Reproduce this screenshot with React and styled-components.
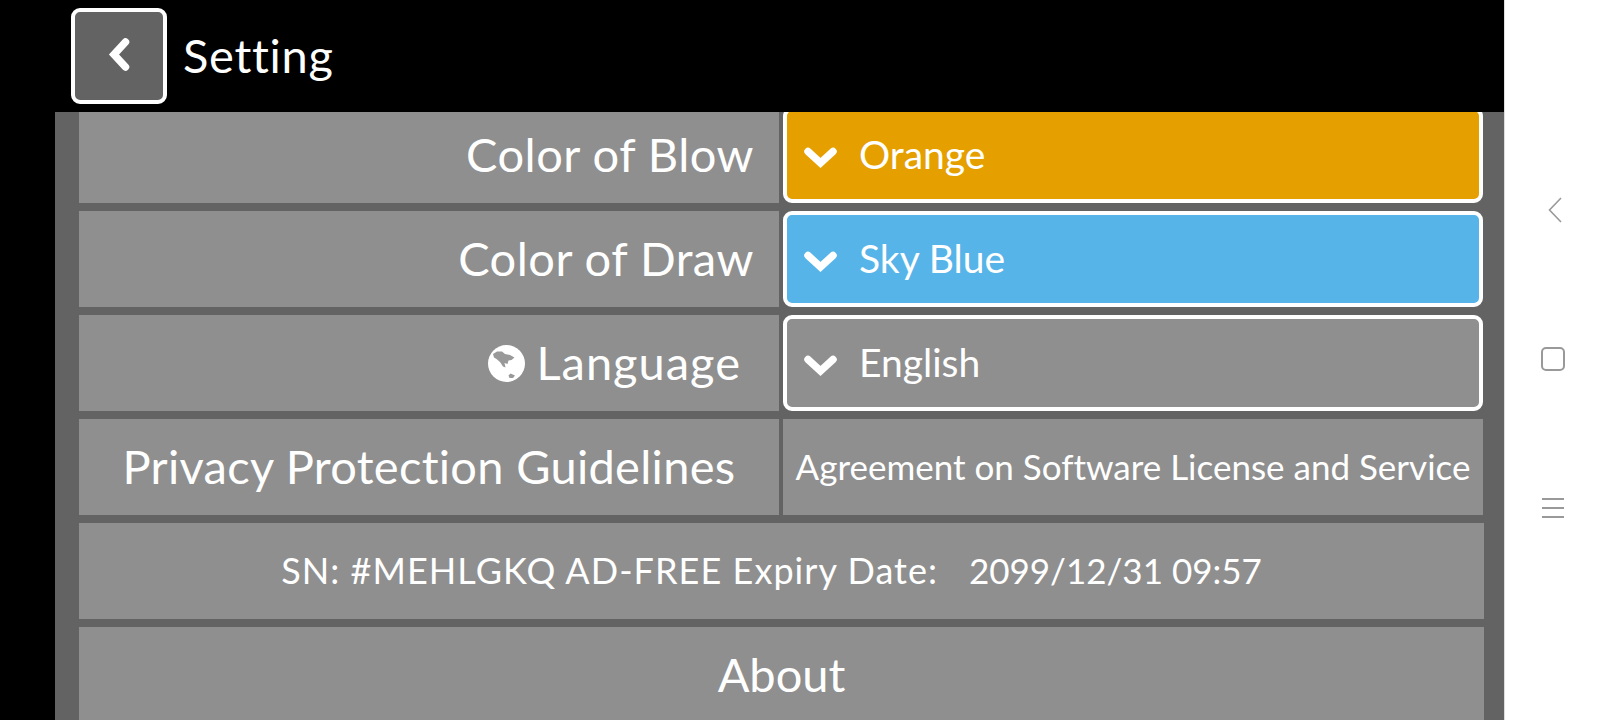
import React from "react";
import styled, { createGlobalStyle } from "styled-components";

const GlobalStyle = createGlobalStyle`
  html, body {
    margin: 0;
    padding: 0;
    background: #000;
    overflow: hidden;
  }
`;

const options = [
  { label: "Color of Blow", value: "Orange", color: "#e5a000" },
  { label: "Color of Draw", value: "Sky Blue", color: "#56b4e9" },
];

function Chevron() {
  return (
    <ChevronSvg viewBox="0 0 33 22">
      <path
        d="M4 4.5 L16.5 16 L29 4.5"
        fill="none"
        stroke="#fff"
        strokeWidth="7.5"
        strokeLinecap="round"
      />
    </ChevronSvg>
  );
}

function Globe() {
  return (
    <GlobeSvg viewBox="0 0 37 37">
      <circle cx="18.5" cy="18.5" r="18.5" fill="#fff" />
      <path
        d="M5 9 L9 6.5 L14 6.5 L17 9 L22 10 L26.5 12.5 L23.5 15 L20.5 15.5 L19.5 19 L16.5 18 L17.5 22.5 L15 21.5 L12 17 L8.5 14 L6 12.5 Z"
        fill="#999"
      />
      <path d="M20.5 30.5 L22.5 28.5 L27 30.5 L25 33 L21.5 33 Z" fill="#999" />
    </GlobeSvg>
  );
}

function SelectBox({ value, color }) {
  return (
    <Select $color={color}>
      <Chevron />
      <SelectText>{value}</SelectText>
    </Select>
  );
}

export default function App() {
  return (
    <Screen>
      <GlobalStyle />
      <Main>
        <Header>
          <BackButton>
            <svg width="22" height="33" viewBox="0 0 22 33">
              <path
                d="M17.5 4 L6 16.5 L17.5 29"
                fill="none"
                stroke="#fff"
                strokeWidth="7.5"
                strokeLinecap="round"
              />
            </svg>
          </BackButton>
          <Title>Setting</Title>
        </Header>
        <Panel>
          <Rows>
            {options.map((o) => (
              <Row key={o.label}>
                <Label>{o.label}</Label>
                <SelectBox value={o.value} color={o.color} />
              </Row>
            ))}
            <Row>
              <LanguageLabel>
                <Globe />
                Language
              </LanguageLabel>
              <SelectBox value="English" color="#8f8f8f" />
            </Row>
            <Row>
              <Cell>Privacy Protection Guidelines</Cell>
              <SmallCell>Agreement on Software License and Service</SmallCell>
            </Row>
            <WideCell>
              <SerialLabel>SN: #MEHLGKQ AD-FREE Expiry Date:&nbsp;&nbsp; </SerialLabel>
              <SerialDate>2099/12/31 09:57</SerialDate>
            </WideCell>
            <AboutCell>About</AboutCell>
          </Rows>
        </Panel>
      </Main>
      <NavBar>
        <NavBack viewBox="0 0 14 26">
          <path d="M13 1 L1.5 13 L13 25" fill="none" stroke="#999" strokeWidth="1.6" />
        </NavBack>
        <NavHome />
        <NavMenu>
          <NavLine />
          <NavLine />
          <NavLine />
        </NavMenu>
      </NavBar>
    </Screen>
  );
}

const Screen = styled.div`
  display: flex;
  width: 1600px;
  height: 720px;
  overflow: hidden;
  font-family: Lato, "Open Sans", sans-serif;
  font-variant-ligatures: none;
  color: #fff;
`;

const Main = styled.div`
  width: 1504px;
  height: 720px;
  display: flex;
  flex-direction: column;
  background: #000;
`;

const Header = styled.div`
  height: 112px;
  flex: none;
  display: flex;
  align-items: center;
  padding-left: 71px;
  gap: 16px;
`;

const BackButton = styled.div`
  width: 96px;
  height: 96px;
  box-sizing: border-box;
  border: 4px solid #fff;
  border-radius: 9px;
  background: #636363;
  display: flex;
  align-items: center;
  justify-content: center;
  padding-bottom: 4px;
`;

const Title = styled.div`
  font-size: 47px;
  letter-spacing: 0.7px;
  line-height: 1;
  padding-bottom: 1px;
`;

const Panel = styled.div`
  flex: 1;
  margin-left: 55px;
  overflow: hidden;
  background: #636363;
  padding: 0 20px 0 24px;
`;

const Rows = styled.div`
  display: flex;
  flex-direction: column;
  gap: 8px;
  margin-top: -5px;
`;

const Row = styled.div`
  display: grid;
  grid-template-columns: 700px 700px;
  gap: 4px;
  height: 96px;
`;

const Label = styled.div`
  box-sizing: border-box;
  background: #8f8f8f;
  display: flex;
  align-items: center;
  justify-content: flex-end;
  padding: 0 25px 3px 0;
  font-size: 47px;
  letter-spacing: 0.5px;
`;

const LanguageLabel = styled(Label)`
  padding-right: 38px;
  gap: 11px;
  letter-spacing: 1px;
`;

const GlobeSvg = styled.svg`
  width: 37px;
  height: 37px;
  flex: none;
  margin-top: 3px;
`;

const Select = styled.div`
  box-sizing: border-box;
  background: ${(p) => p.$color};
  border: 4px solid #fff;
  border-radius: 9px;
  display: flex;
  align-items: center;
  padding-left: 17px;
`;

const ChevronSvg = styled.svg`
  width: 33px;
  height: 22px;
  flex: none;
  margin-top: 6px;
`;

const SelectText = styled.span`
  margin-left: 22px;
  font-size: 39px;
  padding-bottom: 3px;
`;

const Cell = styled.div`
  box-sizing: border-box;
  background: #8f8f8f;
  display: flex;
  align-items: center;
  justify-content: center;
  padding-bottom: 3px;
  font-size: 47px;
  letter-spacing: 0.3px;
  white-space: nowrap;
`;

const SmallCell = styled(Cell)`
  font-size: 35px;
  letter-spacing: 0;
`;

const WideCell = styled(Cell)`
  height: 96px;
  padding-right: 20px;
  white-space: pre;
`;

const SerialLabel = styled.span`
  font-size: 36px;
  letter-spacing: 1.05px;
`;

const SerialDate = styled.span`
  font-size: 35px;
  letter-spacing: 0;
`;

const AboutCell = styled(Cell)`
  height: 96px;
  letter-spacing: 0;
`;

const NavBar = styled.div`
  width: 96px;
  height: 720px;
  box-sizing: border-box;
  background: #fff;
  border-left: 1px solid #ddd;
  display: flex;
  flex-direction: column;
  align-items: center;
  justify-content: center;
  gap: 124px;
  padding-bottom: 5px;
`;

const NavBack = styled.svg`
  width: 14px;
  height: 26px;
  margin-left: 5px;
`;

const NavHome = styled.div`
  width: 24px;
  height: 24px;
  box-sizing: border-box;
  border: 2px solid #999;
  border-radius: 5px;
`;

const NavMenu = styled.div`
  width: 22px;
  height: 20px;
  margin-top: 3px;
  display: flex;
  flex-direction: column;
  justify-content: space-between;
`;

const NavLine = styled.div`
  height: 2px;
  background: #999;
`;
